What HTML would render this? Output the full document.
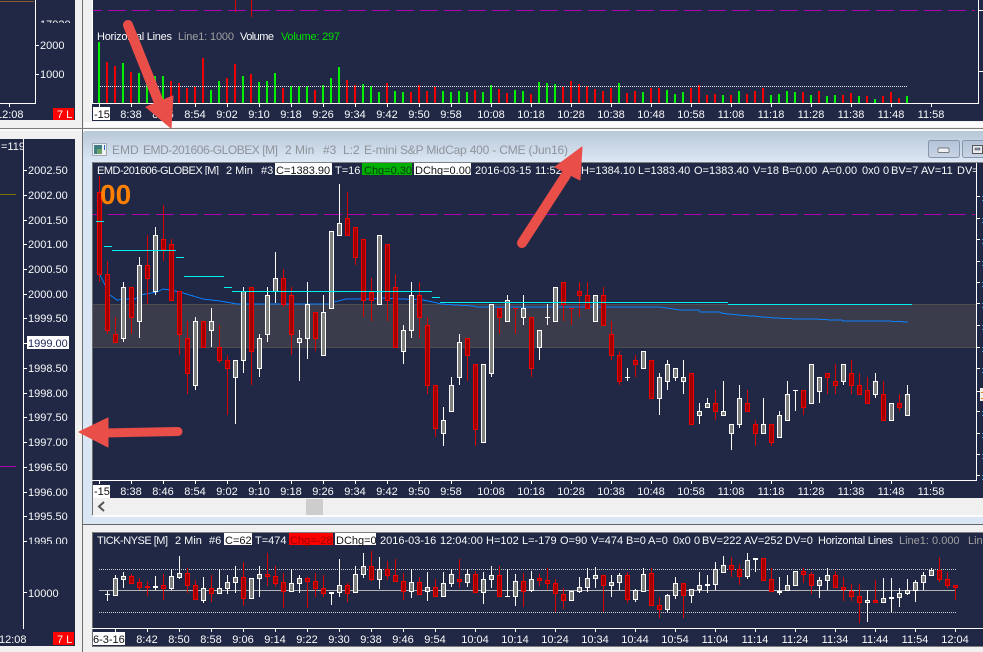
<!DOCTYPE html>
<html><head><meta charset="utf-8"><title>Chart</title>
<style>
html,body{margin:0;padding:0;background:#f0f0f0;overflow:hidden}
svg{display:block;position:absolute;left:0;top:0}
text{font-family:"Liberation Sans",sans-serif;font-size:11px;fill:#f8f8f8;white-space:pre}
.m{text-anchor:middle}
.g{fill:#a0a0a0}
.k{fill:#111}
.t{font-size:12px;fill:#8e949c}
</style></head><body>
<svg width="983" height="652" viewBox="0 0 983 652" xmlns="http://www.w3.org/2000/svg">
<defs>
<linearGradient id="tb" x1="0" y1="0" x2="0" y2="1"><stop offset="0" stop-color="#b8c7d7"/><stop offset="1" stop-color="#dbe7f4"/></linearGradient>
<linearGradient id="bt" x1="0" y1="0" x2="0" y2="1"><stop offset="0" stop-color="#b4c3d8"/><stop offset="1" stop-color="#c8d4e4"/></linearGradient>
<clipPath id="c1"><rect x="0" y="0" width="75" height="120"/></clipPath>
<clipPath id="c2"><rect x="0" y="20" width="75" height="3"/></clipPath>
<clipPath id="c3"><rect x="0" y="139" width="75" height="405"/></clipPath>
<clipPath id="c4"><rect x="93" y="163" width="883" height="12"/></clipPath>
<clipPath id="c5"><rect x="0" y="139" width="23" height="20"/></clipPath>
</defs>
<rect width="983" height="652" fill="#f0f0f0"/>
<!-- frame lines -->
<rect x="82" y="0" width="1" height="130" fill="#6e6e6e"/>
<rect x="0" y="128" width="983" height="1" fill="#7a7a7a"/>
<rect x="0" y="129" width="983" height="2" fill="#fafafa"/>
<rect x="82" y="129" width="1" height="523" fill="#6e6e6e"/>
<rect x="84" y="122" width="899" height="5" fill="#fbfbfb"/>

<!-- left panels -->
<rect x="0" y="0" width="75" height="120" fill="#202846"/>
<rect x="0" y="139" width="75" height="507" fill="#202846"/>

<!-- top chart -->
<rect x="92" y="0" width="891" height="121" fill="#202846"/>

<!-- main window -->
<path d="M83 134q0-3 3-3H983V524H83Z" fill="#dae6f3"/>
<path d="M83 134q0-3 3-3H983V162H83Z" fill="url(#tb)"/>
<rect x="92" y="162" width="891" height="353" fill="#808080"/>
<rect x="93" y="163" width="890" height="335" fill="#202846"/>
<rect x="93" y="498" width="890" height="17" fill="#f0f0f0"/>
<rect x="93" y="515" width="890" height="2" fill="#fbfbfb"/>
<rect x="92" y="162" width="1" height="353" fill="#6e6e6e"/>
<rect x="306" y="499" width="17" height="16" fill="#cdcdcd"/>
<path d="M104 502l-5 4.500 5 4.500" fill="none" stroke="#555" stroke-width="2"/>
<rect x="83" y="524" width="900" height="1" fill="#666"/>

<!-- title bar -->
<rect x="92.500" y="143.500" width="14" height="12" fill="#eef2f6" stroke="#a0aab5"/>
<rect x="94" y="145" width="8" height="9" fill="#3d7f80"/>
<rect x="97" y="149" width="5" height="5" fill="#6ea06a"/>
<rect x="104" y="145" width="1" height="5" fill="#3060c0"/>
<text class="t" x="112" y="154">EMD</text>
<text class="t" x="143" y="154" textLength="135">EMD-201606-GLOBEX [M]</text>
<text class="t" x="285" y="154">2 Min</text>
<text class="t" x="323" y="154">#3</text>
<text class="t" x="343" y="154">L:2</text>
<text class="t" x="364" y="154" textLength="204">E-mini S&amp;P MidCap 400 - CME (Jun16)</text>
<rect x="928.500" y="140.500" width="31" height="17" rx="2" fill="url(#bt)" stroke="#8896ad"/>
<rect x="938" y="148" width="11" height="4.500" rx="1" fill="#eef1f5" stroke="#555" stroke-width=".7"/>
<rect x="962.500" y="140.500" width="30" height="17" rx="2" fill="url(#bt)" stroke="#8896ad"/>
<rect x="972.500" y="145.500" width="10" height="8" fill="#e8ecf2" stroke="#555"/>
<rect x="975" y="148" width="5" height="2" fill="#8a96a8" stroke="#444" stroke-width=".5"/>

<!-- bottom window -->
<rect x="92" y="532" width="891" height="115" fill="#808080"/>
<rect x="93" y="533" width="890" height="113" fill="#202846"/>
<rect x="92" y="532" width="1" height="115" fill="#6e6e6e"/>

<!-- top-left panel content -->
<g clip-path="url(#c1)">
<rect x="0" y="1" width="34" height="1" fill="#8a5a2a"/>
<rect x="35" y="0" width="1" height="104" fill="#fff"/>
<rect x="0" y="103" width="36" height="1" fill="#fff"/>
<rect x="36" y="45" width="3" height="1" fill="#fff"/>
<rect x="36" y="74" width="3" height="1" fill="#fff"/>
<rect x="9" y="104" width="1" height="3" fill="#fff"/>
<text x="-4" y="118">12:08</text>
<rect x="53" y="108" width="21" height="12" fill="#f00"/>
<text x="57" y="118">7 L</text>
<text x="40" y="49">2000</text>
<text x="40" y="78">1000</text>
</g>
<g clip-path="url(#c2)"><text x="40" y="28">17020</text></g>

<!-- left mid axis -->
<g clip-path="url(#c5)"><text x="1" y="150">=1195</text></g>
<g clip-path="url(#c3)">
<rect x="23" y="139" width="1" height="490" fill="#fff"/>
<rect x="0" y="628" width="24" height="1" fill="#fff"/>
<rect x="0" y="194" width="16" height="1" fill="#807000"/>
<rect x="0" y="466" width="16" height="1" fill="#b000b0"/>
<g id="lt"></g>
<text x="28" y="174">2002.50</text>
<text x="28" y="199">2002.00</text>
<text x="28" y="224">2001.50</text>
<text x="28" y="248">2001.00</text>
<text x="28" y="273">2000.50</text>
<text x="28" y="298">2000.00</text>
<text x="28" y="322">1999.50</text>
<rect x="27" y="336" width="42" height="13" fill="#fff"/>
<text class="k" x="28" y="347" style="fill:#20285a">1999.00</text>
<text x="28" y="372">1998.50</text>
<text x="28" y="397">1998.00</text>
<text x="28" y="421">1997.50</text>
<text x="28" y="446">1997.00</text>
<text x="28" y="471">1996.50</text>
<text x="28" y="496">1996.00</text>
<text x="28" y="520">1995.50</text>
<text x="28" y="545">1995.00</text>
</g>
<rect x="23" y="541" width="1" height="88" fill="#fff"/>
<rect x="24" y="592" width="3" height="1" fill="#fff"/>
<text x="28" y="597">10000</text>
<text x="-1" y="643">12:08</text>
<rect x="53" y="632" width="21" height="13" fill="#f00"/>
<text x="57" y="643">7 L</text>

<!-- top chart content -->
<rect x="92" y="0" width="1" height="104" fill="#fff"/>
<rect x="92" y="103" width="887" height="1" fill="#fff"/>
<rect x="978" y="0" width="1" height="104" fill="#fff"/>
<rect x="979" y="10" width="4" height="1" fill="#fff"/>
<rect x="979" y="71" width="4" height="1" fill="#fff"/>
<path d="M93 10.500H975" stroke="#b000b0" fill="none" stroke-dasharray="18 6" stroke-dashoffset="9"/>
<rect x="235" y="0" width="1" height="12" fill="#e00000"/>
<rect x="251" y="0" width="1" height="17" fill="#e00000"/>
<text x="97" y="40" textLength="75">Horizontal Lines</text>
<text class="g" x="178" y="40" textLength="56">Line1: 1000</text>
<text x="240" y="40" textLength="34">Volume</text>
<text x="281" y="40" textLength="59" style="fill:#00e000">Volume: 297</text>
<g id="bars"></g>
<path d="M100 86.500H908" stroke="#e8e8e8" fill="none" stroke-dasharray="1 1"/>
<g id="tt"></g>
<rect x="93" y="107" width="17" height="13" fill="#fff"/>
<text class="k" x="94" y="118">-15</text>
<text class="m" x="131" y="118">8:38</text><text class="m" x="163" y="118">8:46</text><text class="m" x="195" y="118">8:54</text><text class="m" x="227" y="118">9:02</text><text class="m" x="259" y="118">9:10</text><text class="m" x="291" y="118">9:18</text><text class="m" x="323" y="118">9:26</text><text class="m" x="355" y="118">9:34</text><text class="m" x="387" y="118">9:42</text><text class="m" x="419" y="118">9:50</text><text class="m" x="451" y="118">9:58</text><text class="m" x="491" y="118">10:08</text><text class="m" x="531" y="118">10:18</text><text class="m" x="571" y="118">10:28</text><text class="m" x="611" y="118">10:38</text><text class="m" x="651" y="118">10:48</text><text class="m" x="691" y="118">10:58</text><text class="m" x="731" y="118">11:08</text><text class="m" x="771" y="118">11:18</text><text class="m" x="811" y="118">11:28</text><text class="m" x="851" y="118">11:38</text><text class="m" x="891" y="118">11:48</text><text class="m" x="931" y="118">11:58</text>

<!-- main chart -->
<rect x="93" y="304" width="883" height="43" fill="#3a3c4b"/>
<path d="M93 304.500H976M93 347.500H976" stroke="#4e4e50" fill="none"/>
<path d="M93 214.500H975" stroke="#b000b0" fill="none" stroke-dasharray="18 6" stroke-dashoffset="9"/>
<polyline fill="none" stroke="#0a80ff" stroke-width="1" shape-rendering="crispEdges" points="100,275 110,295 117,300 127,299 135,299 140,295 157,292 163,289 170,290 180,292 193,296 203,299 220,301 237,304 267,304 330,304 334,302 342,300 346,299 373,299 380,298 423,300 433,302 441,304 457,305 473,306 477,307 660,307 680,310 699,310 700,312 720,312 721,313 728,314 750,316 752,316 775,318 798,319 813,319 814,319 832,320 842,320 843,321 885,321 886,321 908,322"/>
<g id="c"></g>
<path d="M96 221.500H104M104 246.500H112M112 250.500H176M176 257.500H184M184 276.500H224M224 287.500H232M232 291.500H432M432 297.500H440M440 302.500H728M728 304.500H912" stroke="#00f0f0" fill="none"/>
<rect x="976" y="163" width="1" height="318" fill="#fff"/>
<rect x="92" y="480" width="885" height="1" fill="#fff"/>
<g id="rt"></g>
<rect x="980" y="388" width="3" height="13" fill="#f4efe6"/>
<rect x="981" y="392" width="2" height="1" fill="#e08020"/>
<rect x="981" y="398" width="2" height="1" fill="#e08020"/>
<text x="100" y="204" style="font-size:28px;font-weight:bold;fill:#ff8000">00</text>
<g clip-path="url(#c4)">
<text x="97" y="174" textLength="122">EMD-201606-GLOBEX [M]</text>
<text x="226" y="174">2 Min</text>
<text x="261" y="174">#3</text>
<rect x="275" y="163" width="57" height="12" fill="#fff"/>
<text class="k" x="276" y="174">C=1383.90</text>
<text x="335" y="174">T=16</text>
<rect x="362" y="163" width="50" height="12" fill="#00b000"/>
<text class="k" x="364" y="174" style="fill:#043a10">Chg=0.30</text>
<rect x="414" y="163" width="57" height="12" fill="#fff"/>
<text class="k" x="415" y="174">DChg=0.00</text>
<text x="475" y="174">2016-03-15</text>
<text x="535" y="174">11:52:</text>
<text x="581" y="174">H=1384.10</text>
<text x="638" y="174">L=1383.40</text>
<text x="694" y="174">O=1383.40</text>
<text x="753" y="174">V=18</text>
<text x="782" y="174">B=0.00</text>
<text x="822" y="174">A=0.00</text>
<text x="862" y="174">0x0</text>
<text x="883" y="174">0</text>
<text x="891" y="174">BV=7</text>
<text x="921" y="174">AV=11</text>
<text x="957" y="174">DV=</text>
</g>
<rect x="93" y="485" width="17" height="13" fill="#fff"/>
<text class="k" x="94" y="495">-15</text>
<text class="m" x="131" y="495">8:38</text><text class="m" x="163" y="495">8:46</text><text class="m" x="195" y="495">8:54</text><text class="m" x="227" y="495">9:02</text><text class="m" x="259" y="495">9:10</text><text class="m" x="291" y="495">9:18</text><text class="m" x="323" y="495">9:26</text><text class="m" x="355" y="495">9:34</text><text class="m" x="387" y="495">9:42</text><text class="m" x="419" y="495">9:50</text><text class="m" x="451" y="495">9:58</text><text class="m" x="491" y="495">10:08</text><text class="m" x="531" y="495">10:18</text><text class="m" x="571" y="495">10:28</text><text class="m" x="611" y="495">10:38</text><text class="m" x="651" y="495">10:48</text><text class="m" x="691" y="495">10:58</text><text class="m" x="731" y="495">11:08</text><text class="m" x="771" y="495">11:18</text><text class="m" x="811" y="495">11:28</text><text class="m" x="851" y="495">11:38</text><text class="m" x="891" y="495">11:48</text><text class="m" x="931" y="495">11:58</text>

<!-- bottom chart -->
<path d="M99 569.500H956M99 612.500H956" stroke="#d0d0d0" fill="none" stroke-dasharray="1 1"/>
<rect x="99" y="590" width="857" height="1" fill="#b4b4b4"/>
<g id="d"></g>
<rect x="92" y="628" width="891" height="1" fill="#fff"/>
<g id="bt2"></g>
<text x="97" y="544" textLength="71">TICK-NYSE [M]</text>
<text x="175" y="544">2 Min</text>
<text x="209" y="544">#6</text>
<rect x="224" y="533" width="28" height="12" fill="#fff"/>
<text class="k" x="225" y="544">C=62</text>
<text x="255" y="544">T=474</text>
<rect x="289" y="533" width="44" height="12" fill="#f00"/>
<text class="k" x="290" y="544" style="fill:#900">Chg=-28</text>
<rect x="335" y="533" width="41" height="12" fill="#fff"/>
<text class="k" x="336" y="544">DChg=0</text>
<text x="380" y="544">2016-03-16</text>
<text x="440" y="544">12:04:00</text>
<text x="486" y="544">H=102</text>
<text x="522" y="544">L=-179</text>
<text x="560" y="544">O=90</text>
<text x="591" y="544">V=474</text>
<text x="626" y="544">B=0</text>
<text x="648" y="544">A=0</text>
<text x="673" y="544">0x0</text>
<text x="694" y="544">0</text>
<text x="702" y="544">BV=222</text>
<text x="744" y="544">AV=252</text>
<text x="785" y="544">DV=0</text>
<text x="818" y="544" textLength="75">Horizontal Lines</text>
<text class="g" x="899" y="544">Line1: 0.000</text>
<text class="g" x="968" y="544">Line</text>
<rect x="93" y="632" width="32" height="13" fill="#fff"/>
<text class="k" x="93" y="643">6-3-16</text>
<text class="m" x="147" y="643">8:42</text><text class="m" x="179" y="643">8:50</text><text class="m" x="211" y="643">8:58</text><text class="m" x="243" y="643">9:06</text><text class="m" x="275" y="643">9:14</text><text class="m" x="307" y="643">9:22</text><text class="m" x="339" y="643">9:30</text><text class="m" x="371" y="643">9:38</text><text class="m" x="403" y="643">9:46</text><text class="m" x="435" y="643">9:54</text><text class="m" x="475" y="643">10:04</text><text class="m" x="515" y="643">10:14</text><text class="m" x="555" y="643">10:24</text><text class="m" x="595" y="643">10:34</text><text class="m" x="635" y="643">10:44</text><text class="m" x="675" y="643">10:54</text><text class="m" x="715" y="643">11:04</text><text class="m" x="755" y="643">11:14</text><text class="m" x="795" y="643">11:24</text><text class="m" x="835" y="643">11:34</text><text class="m" x="875" y="643">11:44</text><text class="m" x="915" y="643">11:54</text><text class="m" x="955" y="643">12:04</text>

<!-- arrows -->
<g fill="#ea4e48" stroke="#ea4e48" stroke-linejoin="round">
<path d="M128 25L160 105" stroke-width="10" stroke-linecap="round" fill="none"/>
<path d="M171 128L146 107L173 96Z" stroke-width="1"/>
<path d="M522 243L566 175" stroke-width="10" stroke-linecap="round" fill="none"/>
<path d="M582 147L555 167L580 180Z" stroke-width="1"/>
<path d="M178 431.500L105 433" stroke-width="9" stroke-linecap="round" fill="none"/>
<path d="M79 432L108 418L108 447Z" stroke-width="1"/>
</g>
</svg>
<script>
function R(x,y,w,h,f){return '<rect x="'+x+'" y="'+y+'" width="'+w+'" height="'+h+'" fill="'+f+'"/>';}
function CD(x,t,wt,bt,bb,wb){
 var red=t=='r',s='',wc=red?'#d80000':'#fff';
 if(wb>wt)s+=R(x,wt,1,wb-wt,wc);
 if(bb-bt<2){s+=R(x-2,bt,5,Math.max(1,bb-bt+1),red?'#f00000':'#fff');}
 else s+='<rect x="'+(x-1.5)+'" y="'+(bt+.5)+'" width="4" height="'+(bb-bt)+'" fill="'+(red?'#a00000':'#808080')+'" stroke="'+(red?'#f00000':'#fff')+'"/>';
 return s;
}
/* main: type, wickTop, bodyTop, bodyBot, wickBot */
var M="r176,192,274,282 r261,274,330,334 r317,334,342,342 w282,287,338,342 r287,287,317,334 w257,265,321,338 r235,265,278,304 w227,235,291,295 r205,239,249,261 r239,244,300,300 r291,291,334,355 r321,338,373,394 w317,321,385,390 r321,321,347,347 w308,321,330,347 r325,347,360,363 r355,360,368,415 w360,360,377,424 w287,291,360,373 r287,287,351,385 w334,338,368,377 w287,295,334,342 w252,278,291,303 r269,278,304,307 r287,295,334,355 w330,338,342,381 w282,304,338,359 r312,312,338,351 w295,312,355,355 w231,231,308,308 w184,223,235,235 r192,218,235,235 r227,227,257,265 r239,239,300,317 r278,292,300,321 w235,235,304,304 r244,244,300,321 r274,287,347,347 w325,330,351,364 w282,295,330,338 r282,295,317,338 r317,325,385,394 r385,385,428,437 w407,420,433,446 w377,385,411,411 w334,342,377,385 r338,338,355,381 r364,364,429,446 w364,364,442,442 w304,304,373,377 r308,308,317,334 w295,300,321,321 r308,308,308,334 w295,308,317,325 r317,317,368,377 w330,330,347,360 w304,317,317,325 w287,287,321,321 r282,282,304,321 r308,308,308,325 r282,291,295,317 r282,295,308,308 w295,295,321,321 r287,295,325,325 r321,334,355,360 r351,355,381,385 w368,377,377,381 r355,360,364,377 w351,351,368,368 r360,360,398,398 w373,377,398,415 w360,364,381,390 w368,368,377,381 w360,377,381,394 r373,373,424,424 w403,411,415,424 w398,403,407,407 r390,403,411,420 w381,411,415,415 w424,424,433,450 w385,398,424,428 r390,403,411,411 r420,424,433,446 w398,424,433,433 r424,424,442,446 w411,415,437,437 w381,394,420,420 w390,390,390,411 r390,390,407,415 w364,364,403,403 w377,377,391,403 r373,373,377,394 r364,381,385,394 w364,364,381,385 r360,373,385,394 r373,385,394,394 r377,390,403,403 w373,381,394,398 r381,394,420,420 w403,403,420,420 r394,403,407,411 w385,394,415,415".split(" ");
var h='';M.forEach(function(s,i){var p=s.slice(1).split(",").map(Number);h+=CD(99+8*i,s[0],p[0],p[1],p[2],p[3]);});
document.getElementById('c').innerHTML=h;
/* bottom: zoom coordinates, y=440+z/3 */
var B="w452,463,463,482 w406,415,465,468 w395,408,418,445 r403,408,428,430 r415,427,442,450 r423,438,442,468 w407,438,442,450 r402,436,445,480 w388,409,445,450 w348,400,411,416 r385,400,436,458 r420,436,478,478 w411,445,480,490 r405,445,458,486 w388,445,458,462 w405,427,445,462 w378,412,427,460 r365,412,475,498 w415,415,475,475 w378,403,415,470 r339,403,409,438 r378,409,428,441 r400,427,453,503 w388,430,453,453 w405,415,430,458 r412,415,423,503 r400,424,445,470 r405,445,460,470 w455,455,458,495 w357,436,457,470 r430,436,458,485 w378,403,457,457 w339,379,403,415 r333,379,418,423 w351,388,418,447 r363,388,406,420 r357,406,424,427 r400,424,453,480 w388,427,453,473 r412,427,463,466 w396,442,454,483 r418,442,469,470 w396,430,469,469 w388,403,430,441 r357,418,424,444 w388,403,427,441 r394,403,457,460 w396,418,457,491 w378,406,418,445 r378,406,469,469 w388,468,468,470 w403,424,469,497 r400,424,454,500 w393,418,451,456 r403,415,421,437 r385,421,430,450 r418,430,460,516 r445,463,481,507 w454,454,481,481 w412,442,454,460 w385,415,442,456 w381,406,415,444 r406,406,436,516 w405,427,436,470 w400,406,427,450 r397,406,478,490 w447,451,478,485 w384,403,454,456 r385,400,496,496 r470,496,508,533 w463,466,508,515 w411,430,466,476 r430,430,466,533 w448,448,466,488 w396,436,448,458 w405,433,436,458 w367,388,433,450 w348,376,397,400 r351,376,388,412 r372,388,409,434 w339,361,409,417 w355,355,358,396 r355,355,421,424 r385,418,454,457 w411,454,456,465 w405,436,451,451 w394,394,436,436 r385,394,403,429 r396,403,436,462 w411,421,436,474 w384,406,421,451 r394,406,442,442 r411,442,448,484 r432,454,469,484 r432,469,487,549 w451,481,487,546 r420,481,487,490 w414,475,487,487 w414,472,475,517 w445,460,472,502 w417,451,460,466 w421,427,451,487 w397,406,427,450 w384,391,406,406 r352,391,418,425 r396,418,436,443 r436,436,442,481".split(" ");
h='';B.forEach(function(s,i){var p=s.slice(1).split(",").map(function(v){return Math.round(440+v/3);});h+=CD(107+8*i,s[0],p[0],p[1],p[2],p[3]);});
document.getElementById('d').innerHTML=h;
/* volume bars */
var V="g42 r62 r66 g63 r72 g73 g77 g76 g76 r81 r83 r88 r87 r58 g90 g81 r78 r64 g76 r74 g82 g81 g73 r88 g86 g86 g86 r90 g85 g78 g67 r80 r85 g84 g86 g92 r83 g91 g92 r92 r85 r91 r87 g91 g92 g91 g92 r90 g92 g85 r89 r93 g90 g91 r94 g82 g83 g84 r87 r81 r84 r86 r89 r91 r88 g83 r93 r91 g92 r88 r88 g90 g94 g92 r88 r85 r95 r94 g95 r95 g91 r94 r91 r88 g95 g94 g91 g92 r92 g95 r91 g96 g95 r95 r93 g96 r96 g99 r96 r92 r98 g96".split(" ");
h='';V.forEach(function(s,i){var y=+s.slice(1);h+=R(98+8*i,y,2,103-y,s[0]=='g'?'#00f000':'#f00000');});
document.getElementById('bars').innerHTML=h;
/* ticks */
function T(a,y,len){return a.map(function(x){return R(x,y,1,len,'#fff');}).join('');}
var t1=[131,163,195,227,259,291,323,355,387,419,451,491,531,571,611,651,691,731,771,811,851,891,931];
document.getElementById('tt').innerHTML=T([99].concat(t1),104,3);
h=T([99].concat(t1),481,3);
[239,261,282,303,325,347,368,391,411,433,454,475,218,196].forEach(function(y){h+=R(977,y,3,1,'#fff')+R(982,y,1,1,'#3aa0e0')+R(982,y+4,1,1,'#3aa0e0');});
document.getElementById('rt').innerHTML=h;
document.getElementById('bt2').innerHTML=T([115,147,179,211,243,275,307,339,371,403,435,475,515,555,595,635,675,715,755,795,835,875,915,955],629,3);
var l='';[170,195,220,244,269,294,318,343,368,393,417,442,467,492,516,541].forEach(function(y){l+=R(24,y,3,1,'#fff');});
document.getElementById('lt').innerHTML=l;
</script>
</body></html>
